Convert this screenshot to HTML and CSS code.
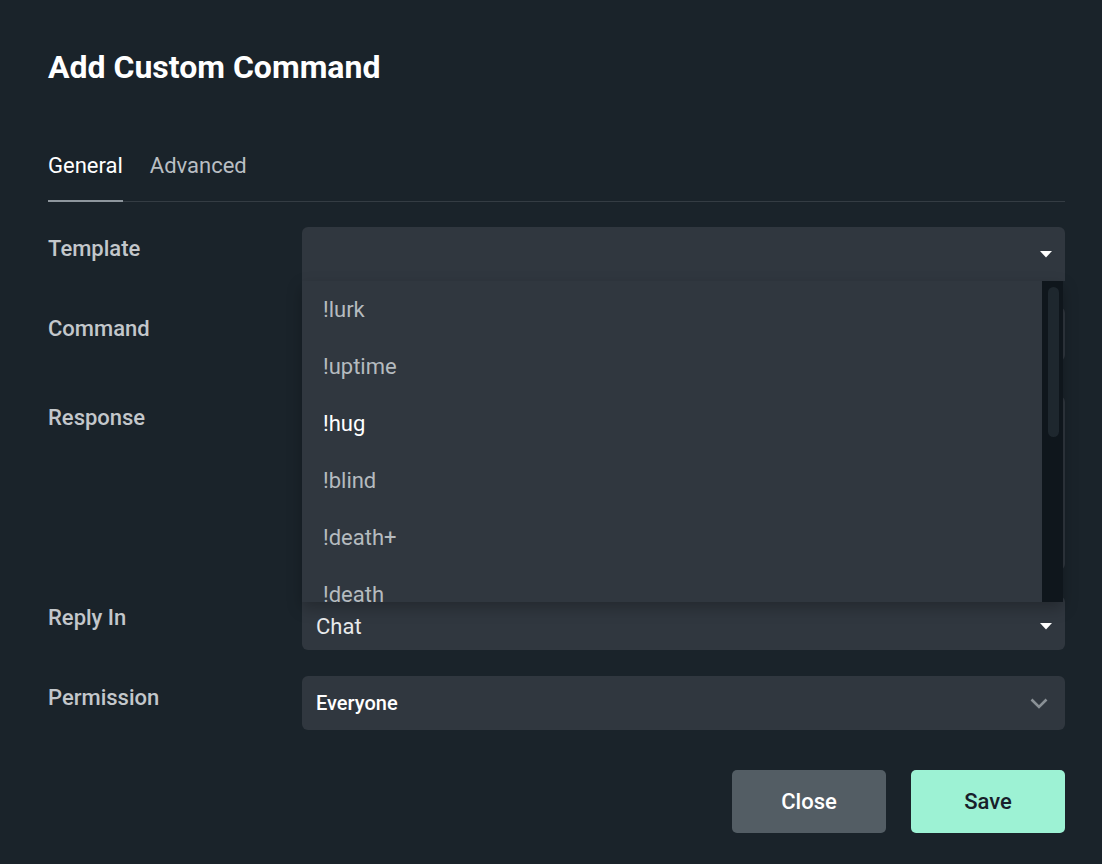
FILE: index.html
```html
<!DOCTYPE html>
<html lang="en">

<head>
    <meta charset="UTF-8">
    <meta name="viewport" content="width=device-width, initial-scale=1.0">
    <link rel="stylesheet" href="styles.css">
</head>

<body>
    <!-- Dialog: add a custom chat command -->
    <div class="dialog">
        <h1 class="dialog-title">Add Custom Command</h1>

        <!-- Tabs -->
        <nav class="tabs">
            <span class="tab active">General</span>
            <span class="tab">Advanced</span>
        </nav>

        <div class="form">
            <!-- Template with its open dropdown -->
            <label class="field-label">Template</label>
            <div class="field">
                <div class="select template-select">
                    <span class="select-value"></span>
                    <svg class="caret" width="12" height="7" viewBox="0 0 12 7"><path d="M0 0h12L6 6.5z" fill="#fff"/></svg>
                </div>
                <div class="menu">
                    <ul class="menu-list">
                        <li class="menu-item">!lurk</li>
                        <li class="menu-item">!uptime</li>
                        <li class="menu-item hover">!hug</li>
                        <li class="menu-item">!blind</li>
                        <li class="menu-item">!death+</li>
                        <li class="menu-item">!death</li>
                    </ul>
                    <div class="scrollbar"><div class="thumb"></div></div>
                </div>
            </div>

            <label class="field-label">Command</label>
            <div class="field">
                <div class="input"></div>
            </div>

            <label class="field-label response-label">Response</label>
            <div class="field">
                <div class="textarea"></div>
            </div>

            <label class="field-label">Reply In</label>
            <div class="field">
                <div class="select reply-select">
                    <span class="select-value">Chat</span>
                    <svg class="caret" width="12" height="7" viewBox="0 0 12 7"><path d="M0 0h12L6 6.5z" fill="#fff"/></svg>
                </div>
            </div>

            <label class="field-label">Permission</label>
            <div class="field">
                <div class="select permission-select">
                    <span class="select-value">Everyone</span>
                    <svg class="chevron" width="18" height="11" viewBox="0 0 18 11"><path d="M1.5 1.5L9 9l7.5-7.5" fill="none" stroke="#8a9196" stroke-width="2.6"/></svg>
                </div>
            </div>
        </div>

        <!-- Footer buttons -->
        <div class="actions">
            <button class="btn btn-close">Close</button>
            <button class="btn btn-save">Save</button>
        </div>
    </div>
</body>

</html>
```
FILE: styles.css
```css
/* Page and dialog */
body {
    margin: 0;
    background-color: #1a232a;
    font-family: 'Roboto', 'Noto Sans', sans-serif;
    color: #fff;
}

.dialog {
    padding: 49px 37px 31px 48px;
}

.dialog-title {
    margin: 0;
    font-size: 32px;
    font-weight: 700;
    line-height: 36px;
}

/* Tabs */
.tabs {
    display: flex;
    gap: 27px;
    margin-top: 68px;
    border-bottom: 1px solid #343c43;
}

.tab {
    font-size: 22px;
    font-weight: 400;
    line-height: 26px;
    padding-bottom: 21px;
    color: #b9bec3;
}

.tab.active {
    color: #fff;
    border-bottom: 2px solid #8e969d;
    margin-bottom: -1px;
}

/* Form grid: label column + field column */
.form {
    display: grid;
    grid-template-columns: 254px 1fr;
    row-gap: 26px;
    margin-top: 25px;
}

.field-label {
    padding-top: 9px;
    font-size: 22px;
    font-weight: 500;
    line-height: 26px;
    color: #c3c7cb;
}

.response-label {
    padding-top: 18px;
}

.field {
    position: relative;
}

.select,
.input,
.textarea {
    background-color: #30373f;
    border-radius: 6px;
    box-sizing: border-box;
}

.select {
    display: flex;
    align-items: center;
    justify-content: space-between;
    height: 54px;
    padding: 0 13px 0 14px;
}

.input {
    height: 54px;
}

.textarea {
    height: 174px;
    margin-top: 9px;
}

.template-select {
    border-radius: 6px 6px 0 0;
}

.reply-select {
    padding-top: 6px;
}

.select-value {
    font-size: 22px;
    color: #e8eaec;
}

.permission-select .select-value {
    font-size: 20px;
    font-weight: 500;
    color: #fff;
}

.chevron {
    margin-right: 4px;
}

/* Open dropdown list of templates */
.menu {
    position: absolute;
    top: 54px;
    left: 0;
    right: 2px;
    height: 321px;
    display: flex;
    background-color: #30373f;
    box-shadow: 0 6px 14px rgba(0, 0, 0, 0.25);
    overflow: hidden;
    z-index: 2;
}

.menu-list {
    flex: 1;
    list-style: none;
    margin: 0;
    padding: 0;
}

.menu-item {
    height: 57px;
    padding-left: 21px;
    font-size: 22px;
    line-height: 57px;
    color: #b5bbbf;
}

.menu-item.hover {
    color: #fff;
}

.scrollbar {
    width: 21px;
    background-color: #0f161c;
    padding: 6px 4px 0 6px;
    box-sizing: border-box;
}

.thumb {
    height: 150px;
    border-radius: 6px;
    background-color: #1e272e;
}

/* Buttons */
.actions {
    display: flex;
    justify-content: flex-end;
    gap: 25px;
    margin-top: 40px;
}

.btn {
    width: 154px;
    height: 63px;
    border: none;
    border-radius: 5px;
    font-family: inherit;
    font-size: 22px;
    font-weight: 500;
    cursor: pointer;
}

.btn-close {
    background-color: #535d64;
    color: #fff;
}

.btn-save {
    background-color: #9df2d4;
    color: #17202a;
}
```
